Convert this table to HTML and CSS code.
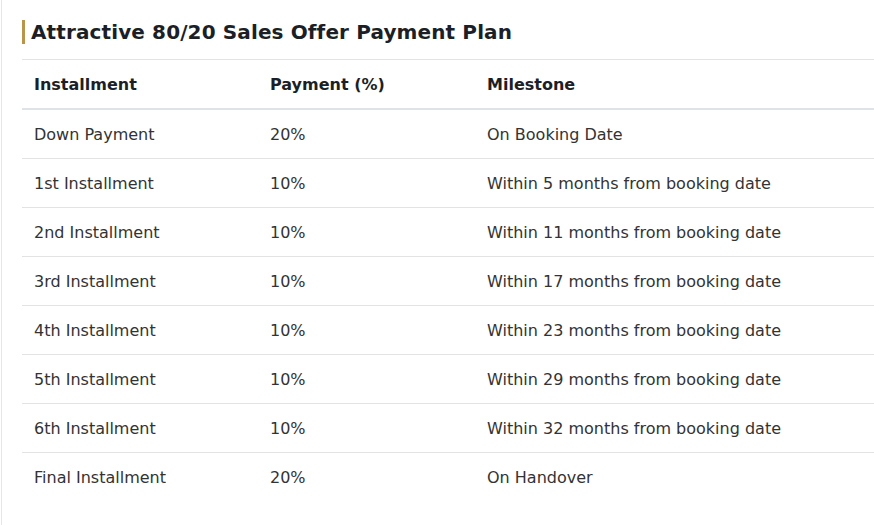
FILE: index.html
```html
<!DOCTYPE html>
<html>
<head>
<meta charset="utf-8">
<link rel="stylesheet" href="styles.css">
</head>
<body>
<div class="page">
  <h2 class="title">Attractive 80/20 Sales Offer Payment Plan</h2>
  <table class="plan">
    <thead>
      <tr><th class="c1">Installment</th><th class="c2">Payment (%)</th><th class="c3">Milestone</th></tr>
    </thead>
    <tbody>
      <tr><td>Down Payment</td><td>20%</td><td>On Booking Date</td></tr>
      <tr><td>1st Installment</td><td>10%</td><td>Within 5 months from booking date</td></tr>
      <tr><td>2nd Installment</td><td>10%</td><td>Within 11 months from booking date</td></tr>
      <tr><td>3rd Installment</td><td>10%</td><td>Within 17 months from booking date</td></tr>
      <tr><td>4th Installment</td><td>10%</td><td>Within 23 months from booking date</td></tr>
      <tr><td>5th Installment</td><td>10%</td><td>Within 29 months from booking date</td></tr>
      <tr><td>6th Installment</td><td>10%</td><td>Within 32 months from booking date</td></tr>
      <tr><td>Final Installment</td><td>20%</td><td>On Handover</td></tr>
    </tbody>
  </table>
</div>
</body>
</html>
```
FILE: styles.css
```css
html, body { margin: 0; padding: 0; background: #fff; }
body { font-family: "DejaVu Sans", Verdana, sans-serif; color: #222; }
.page {
  border-left: 1px solid #e6e6e6;
  margin-left: 1px;
  padding: 20px 0 0 20px;
  height: 525px;
  box-sizing: border-box;
}
.title {
  margin: 0;
  font-size: 20px;
  font-weight: bold;
  color: #1c1f26;
  line-height: 23px;
  padding-top: 1px;
  letter-spacing: 0.12px;
  border-left: 3px solid #b8954a;
  padding-left: 6px;
}
.plan {
  margin-top: 15px;
  width: 853px;
  border-collapse: collapse;
  font-size: 16px;
}
.plan th, .plan td {
  text-align: left;
  padding: 0 12px;
  height: 48px;
  border-top: 1px solid #e3e3e3;
}
.plan th { font-weight: bold; color: #1c1f26; border-bottom: 2px solid #dfe2e6; height: 48px; }
.plan td { color: #333; }
.c1 { width: 212px; }
.c2 { width: 193px; }
```
